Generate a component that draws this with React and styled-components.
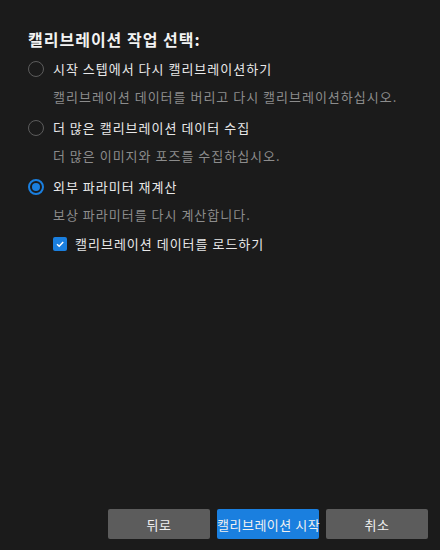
import React, { useState } from 'react';
import styled, { createGlobalStyle } from 'styled-components';

const GlobalStyle = createGlobalStyle`
  html, body {
    margin: 0;
    padding: 0;
    background: #1b1b1b;
  }
  body {
    font-family: "Noto Sans CJK KR", "Noto Sans", sans-serif;
    letter-spacing: 1px;
  }
`;

const options = [
  {
    id: 'restart',
    label: '시작 스텝에서 다시 캘리브레이션하기',
    desc: '캘리브레이션 데이터를 버리고 다시 캘리브레이션하십시오.',
  },
  {
    id: 'collect',
    label: '더 많은 캘리브레이션 데이터 수집',
    desc: '더 많은 이미지와 포즈를 수집하십시오.',
  },
  {
    id: 'recalc',
    label: '외부 파라미터 재계산',
    desc: '보상 파라미터를 다시 계산합니다.',
  },
];

const App = () => {
  const [selected, setSelected] = useState('recalc');
  const [loadData, setLoadData] = useState(true);

  return (
    <>
      <GlobalStyle />
      <Page>
        <Content>
          <Title>캘리브레이션 작업 선택:</Title>
          <OptionList>
            {options.map(opt => (
              <Option key={opt.id}>
                <RadioRow onClick={() => setSelected(opt.id)}>
                  <Radio checked={selected === opt.id} />
                  <Label>{opt.label}</Label>
                </RadioRow>
                <Desc>{opt.desc}</Desc>
              </Option>
            ))}
          </OptionList>
          <CheckRow onClick={() => setLoadData(!loadData)}>
            <CheckBox checked={loadData}>
              {loadData && (
                <svg width="10" height="10" viewBox="0 0 10 10">
                  <path d="M2 5.2 L4.2 7.2 L8.2 3" fill="none" stroke="#fff" strokeWidth="1.5" />
                </svg>
              )}
            </CheckBox>
            <Label>캘리브레이션 데이터를 로드하기</Label>
          </CheckRow>
        </Content>
        <Footer>
          <Button>뒤로</Button>
          <Button primary>캘리브레이션 시작</Button>
          <Button>취소</Button>
        </Footer>
      </Page>
    </>
  );
};

const Page = styled.div`
  height: 100vh;
  display: flex;
  flex-direction: column;
  box-sizing: border-box;
`;

const Content = styled.div`
  flex: 1;
  padding: 27px 28px 0;
  display: flex;
  flex-direction: column;
`;

const Title = styled.div`
  font-size: 16px;
  font-weight: bold;
  line-height: 24px;
  color: #f2f2f2;
`;

const OptionList = styled.div`
  display: flex;
  flex-direction: column;
  gap: 11px;
  margin-top: 8px;
`;

const Option = styled.div`
  display: flex;
  flex-direction: column;
  gap: 8px;
`;

const RadioRow = styled.div`
  display: flex;
  align-items: center;
  gap: 9px;
  height: 20px;
  cursor: pointer;
`;

const Radio = styled.span`
  width: 16px;
  height: 16px;
  box-sizing: border-box;
  border-radius: 50%;
  border: ${props => (props.checked ? '2px solid #1a7fdf' : '1.5px solid #5c5c5c')};
  display: flex;
  align-items: center;
  justify-content: center;

  &::after {
    content: '';
    display: ${props => (props.checked ? 'block' : 'none')};
    width: 8px;
    height: 8px;
    border-radius: 50%;
    background: #1a7fdf;
  }
`;

const Label = styled.span`
  font-size: 13px;
  line-height: 20px;
  color: #e8e8e8;
`;

const Desc = styled.div`
  font-size: 13px;
  line-height: 20px;
  color: #8c8c8c;
  padding-left: 25px;
`;

const CheckRow = styled.div`
  display: flex;
  align-items: center;
  gap: 8px;
  height: 20px;
  margin-top: 9px;
  padding-left: 25px;
  cursor: pointer;
`;

const CheckBox = styled.span`
  width: 14px;
  height: 14px;
  border-radius: 2px;
  background: ${props => (props.checked ? '#1a7fdf' : 'transparent')};
  border: ${props => (props.checked ? 'none' : '1.5px solid #5c5c5c')};
  display: flex;
  align-items: center;
  justify-content: center;
`;

const Footer = styled.div`
  display: flex;
  justify-content: flex-end;
  gap: 7px;
  padding: 0 12px 11px;
`;

const Button = styled.button`
  width: 102px;
  height: 30px;
  border: none;
  border-radius: 2px;
  padding: 0;
  font-family: inherit;
  font-size: 13px;
  letter-spacing: 0.5px;
  white-space: nowrap;
  color: #f0f0f0;
  background: ${props => (props.primary ? '#1a7fdf' : '#5c5c5c')};
  cursor: pointer;
`;

export default App;
